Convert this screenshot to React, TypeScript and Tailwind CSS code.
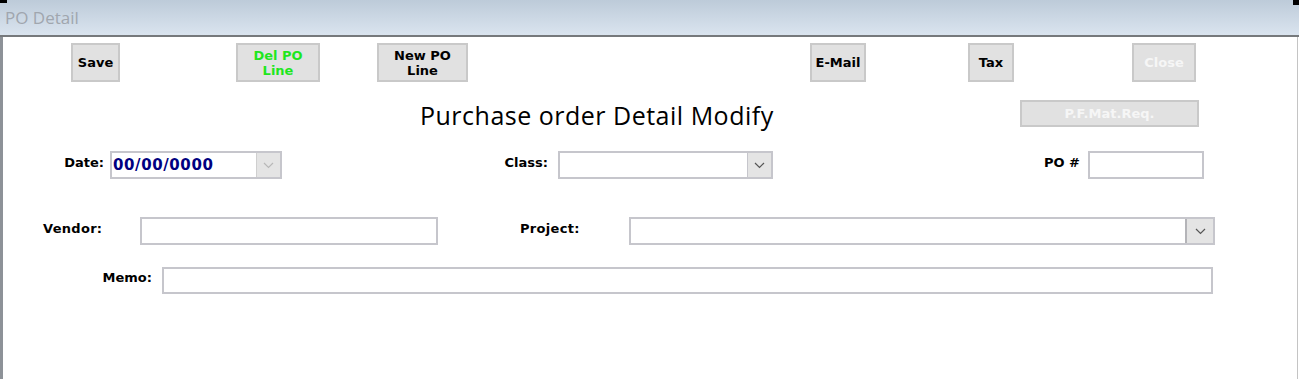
const labelFont = { fontFamily: '"DejaVu Sans", Verdana, sans-serif' };

function Btn({
  children,
  className,
  text = "text-black",
}: {
  children: React.ReactNode;
  className: string;
  text?: string;
}) {
  return (
    <div
      className={`flex flex-col items-center justify-center bg-[#e1e1e1] border-2 border-[#c9c9c9] text-[13px] font-bold leading-[15px] ${text} ${className}`}
      style={labelFont}
    >
      {children}
    </div>
  );
}

function Chevron({ color }: { color: string }) {
  return (
    <svg width="11" height="7" viewBox="0 0 11 7">
      <polyline points="1,1 5.5,5.5 10,1" fill="none" stroke={color} strokeWidth="1.2" />
    </svg>
  );
}

function Label({ children, className }: { children: React.ReactNode; className: string }) {
  return (
    <div className={`shrink-0 pb-[5px] text-[13px] font-bold text-black ${className}`} style={labelFont}>
      {children}
    </div>
  );
}

export default function App() {
  return (
    <div className="relative w-[1299px] h-[379px] overflow-hidden bg-white">
      {/* window corners */}
      <div className="absolute left-0 top-0 w-[7px] h-[3px] bg-black" />
      <div className="absolute right-0 top-0 w-[6px] h-[5px] bg-black" />

      {/* title bar */}
      <div className="h-[35px] bg-gradient-to-b from-[#bdcbd9] to-[#dae4ef] flex items-center pl-[5px]">
        <span className="text-[17px] text-[#a0a6ae]" style={{ fontFamily: '"Open Sans", "Noto Sans", sans-serif' }}>
          PO Detail
        </span>
      </div>
      <div className="h-[2px] bg-[#76797c]" />

      {/* body */}
      <div className="h-[342px] w-[1298px] border-l-[3px] border-r border-[#8d9298] border-r-[#c4c4c4] pt-[6px]">
        {/* button row */}
        <div className="flex h-[39px]">
          <Btn className="ml-[68px] w-[49px] h-[39px]">Save</Btn>
          <Btn className="ml-[116px] w-[84px] h-[39px]" text="text-[#1ee61e]">
            <span>Del PO</span>
            <span>Line</span>
          </Btn>
          <Btn className="ml-[57px] w-[91px] h-[39px]">
            <span>New PO</span>
            <span>Line</span>
          </Btn>
          <Btn className="ml-[342px] w-[56px] h-[39px]">E-Mail</Btn>
          <Btn className="ml-[102px] w-[46px] h-[39px]">Tax</Btn>
          <Btn className="ml-[118px] w-[64px] h-[39px]" text="text-[#f6f6f6]">Close</Btn>
        </div>

        {/* heading row */}
        <div className="flex items-center h-[27px] mt-[18px]">
          <div
            className="ml-[417px] w-[600px] pt-[3px] text-[25px] leading-none tracking-[0.5px] text-black"
            style={{ fontFamily: '"Open Sans", "Noto Sans", sans-serif' }}
          >
            Purchase order Detail Modify
          </div>
          <Btn className="w-[179px] h-[27px]" text="text-[#f6f6f6]">P.F.Mat.Req.</Btn>
        </div>

        {/* date / class / po row */}
        <div className="flex items-center h-[28px] mt-[24px]">
          <Label className="w-[101px] text-right">Date:</Label>
          <div className="ml-[6px] w-[172px] h-[28px] flex border-2 border-[#c6c6cc]">
            <div
              className="flex-1 flex items-center pl-[1px] text-[15px] font-bold tracking-[0.6px] text-[#000080]"
              style={labelFont}
            >
              00/00/0000
            </div>
            <div className="w-[24px] flex items-center justify-center bg-[#e4e4e4] border-l border-[#cfcfcf]">
              <Chevron color="#b8b8b8" />
            </div>
          </div>
          <Label className="w-[266px] text-right">Class:</Label>
          <div className="ml-[10px] w-[215px] h-[28px] flex border-2 border-[#c6c6cc]">
            <div className="flex-1" />
            <div className="w-[24px] flex items-center justify-center bg-[#e4e4e4] border-l border-[#c6c6cc]">
              <Chevron color="#555555" />
            </div>
          </div>
          <Label className="w-[307px] text-right">PO #</Label>
          <div className="ml-[8px] w-[116px] h-[28px] border-2 border-[#c6c6cc]" />
        </div>

        {/* vendor / project row */}
        <div className="flex items-center h-[28px] mt-[38px]">
          <Label className="ml-[40px] w-[97px] tracking-[0.3px]">Vendor:</Label>
          <div className="w-[298px] h-[28px] border-2 border-[#c6c6cc]" />
          <Label className="ml-[82px] w-[109px] tracking-[0.3px]">Project:</Label>
          <div className="w-[586px] h-[28px] flex border-2 border-[#c6c6cc]">
            <div className="flex-1" />
            <div className="w-[28px] flex items-center justify-center bg-[#e4e4e4] border-l-2 border-[#b4b4b8]">
              <Chevron color="#555555" />
            </div>
          </div>
        </div>

        {/* memo row */}
        <div className="flex items-center h-[27px] mt-[22px]">
          <Label className="w-[149px] text-right">Memo:</Label>
          <div className="ml-[10px] w-[1051px] h-[27px] border-2 border-[#c6c6cc]" />
        </div>
      </div>
    </div>
  );
}
